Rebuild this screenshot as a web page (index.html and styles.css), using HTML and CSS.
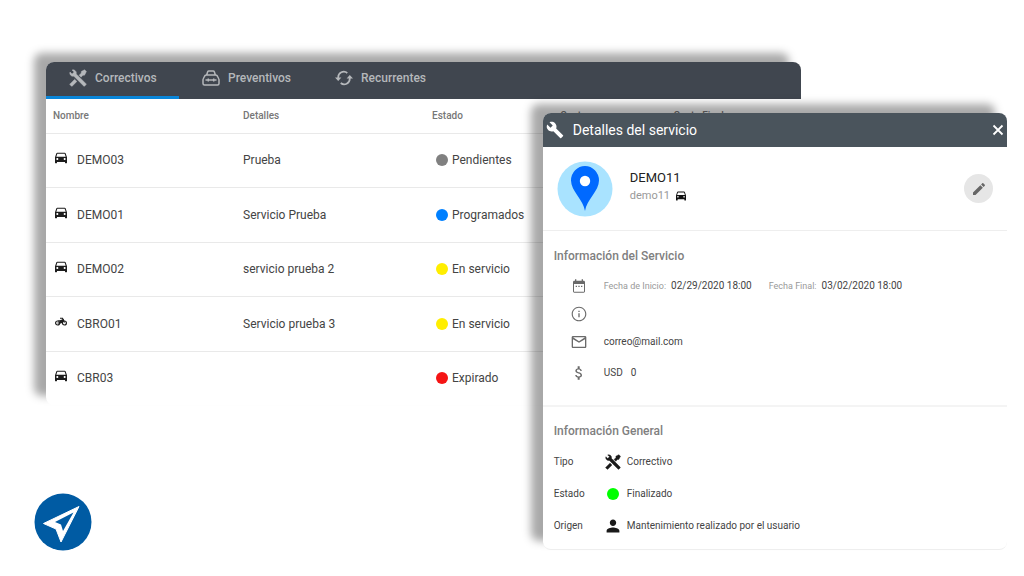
FILE: index.html
```html
<!DOCTYPE html>
<html lang="es">
<head>
<meta charset="utf-8">
<title>Mantenimiento</title>
<link rel="stylesheet" href="styles.css">
</head>
<body>
<svg class="defs" aria-hidden="true">
  <symbol id="tools" viewBox="1 1 22 22"><path d="M21.71 20.29l-1.42 1.42a1 1 0 0 1-1.41 0L7 9.85A3.81 3.81 0 0 1 6 10 4 4 0 0 1 2.22 4.7l2.54 2.54 2.48-2.48L4.7 2.22A4 4 0 0 1 10 6a3.81 3.81 0 0 1-.15 1l11.86 11.88a1 1 0 0 1 0 1.41M2.29 18.88a1 1 0 0 0 0 1.41l1.42 1.42a1 1 0 0 0 1.41 0l5.47-5.46-2.83-2.83M20 2l-4 2v2l-2.6 2.6 2.4 2.4L18 8.500h2L22.300 4z" stroke="currentColor" stroke-width=".6" stroke-linejoin="round"/></symbol>
  <symbol id="car" viewBox="3 4 18 18"><path d="M18.92 6.01C18.72 5.42 18.16 5 17.5 5h-11c-.66 0-1.21.42-1.42 1.01L3 12v8c0 .55.45 1 1 1h1c.55 0 1-.45 1-1v-1h12v1c0 .55.45 1 1 1h1c.55 0 1-.45 1-1v-8l-2.08-5.99zM6.5 16c-.83 0-1.500-.67-1.500-1.500S5.670 13 6.500 13s1.500.67 1.500 1.500S7.330 16 6.500 16zm11 0c-.83 0-1.500-.67-1.500-1.500s.67-1.500 1.500-1.500 1.500.67 1.500 1.500-.67 1.500-1.500 1.500zM5 11l1.500-4.500h11L19 11H5z"/></symbol>
  <symbol id="moto" viewBox="0 2 24 20"><g fill="none" stroke="currentColor" stroke-width="2.400"><circle cx="5.200" cy="14" r="4"/><circle cx="18.800" cy="14" r="4"/><path d="M10 4.500h5L19 13M5 14h6.500l5-5"/></g><path d="M5 8.500h5l4-1.500 3-1 1.500 2.500-5 5.500h-3L9 11z"/></symbol>
</svg>
<main class="stage">
  <section class="panel board">
    <nav class="tabs">
      <button class="tab active"><svg class="tab-icon"><use href="#tools"/></svg>Correctivos</button>
      <button class="tab"><svg class="tab-icon outline" viewBox="0 0 18 18" stroke="currentColor" stroke-width="1.500"><path d="M4.600 6L5.700 2.800Q6 2 6.800 2h4.400q.8 0 1.100.8L13.400 6M4.500 6h9q1.200 0 1.800 1l1.300 2.500q.4.700.4 1.500v3.500q0 1.500-1.500 1.500h-13Q1 16 1 14.500V11q0-.8.400-1.500L2.700 7q.6-1 1.800-1zM3.500 11h11M6.300 9.500v3M11.700 9.500v3"/></svg>Preventivos</button>
      <button class="tab"><svg class="tab-icon" viewBox="0 0 18 18"><path class="outline" stroke="currentColor" stroke-width="1.700" d="M3.200 10V8.500A5.600 5.600 0 0 1 12.300 4M14.800 8v1.500A5.600 5.600 0 0 1 5.700 14"/><path d="M0 8.600h6.400L3.200 12zM11.600 9.400H18L14.800 6z"/></svg>Recurrentes</button>
    </nav>
    <table class="services">
      <colgroup><col class="c-name"><col class="c-detail"><col class="c-state"><col class="c-cost"><col></colgroup>
      <thead><tr><th>Nombre</th><th>Detalles</th><th>Estado</th><th>Costo</th><th>Costo Final</th></tr></thead>
      <tbody>
        <tr><td><span class="cell"><svg class="vehicle"><use href="#car"/></svg>DEMO03</span></td><td>Prueba</td><td><span class="state"><i class="dot gray"></i>Pendientes</span></td><td></td><td></td></tr>
        <tr><td><span class="cell"><svg class="vehicle"><use href="#car"/></svg>DEMO01</span></td><td>Servicio Prueba</td><td><span class="state"><i class="dot blue"></i>Programados</span></td><td></td><td></td></tr>
        <tr><td><span class="cell"><svg class="vehicle"><use href="#car"/></svg>DEMO02</span></td><td>servicio prueba 2</td><td><span class="state"><i class="dot yellow"></i>En servicio</span></td><td></td><td></td></tr>
        <tr><td><span class="cell"><svg class="vehicle"><use href="#moto"/></svg>CBRO01</span></td><td>Servicio prueba 3</td><td><span class="state"><i class="dot yellow"></i>En servicio</span></td><td></td><td></td></tr>
        <tr><td><span class="cell"><svg class="vehicle"><use href="#car"/></svg>CBR03</span></td><td></td><td><span class="state"><i class="dot red"></i>Expirado</span></td><td></td><td></td></tr>
      </tbody>
    </table>
  </section>

  <section class="panel dialog" role="dialog" aria-labelledby="dialog-title">
    <header class="dialog-head">
      <svg class="head-icon" viewBox="0 0 24 24"><path d="M22.700 19l-9.100-9.100c.9-2.300.4-5-1.500-6.900-2-2-5-2.400-7.400-1.300L9 6 6 9 1.600 4.700C.4 7.100.9 10.100 2.900 12.100c1.900 1.900 4.600 2.400 6.900 1.500l9.100 9.100c.4.400 1 .4 1.400 0l2.300-2.300c.5-.4.5-1.100.1-1.400z"/></svg>
      <h2 id="dialog-title">Detalles del servicio</h2>
      <button class="close" aria-label="Cerrar"><svg viewBox="0 0 12 12"><path d="M1.500 1.500l9 9M10.500 1.500l-9 9" stroke="currentColor" stroke-width="1.800"/></svg></button>
    </header>
    <div class="profile">
      <svg class="avatar" viewBox="0 0 56 56"><circle cx="28" cy="28" r="27.500" fill="#a9e3ff"/><path d="M28 50C26.500 39 14 30 14 19.500a14 14.500 0 0 1 28 0C42 30 29.500 39 28 50z" fill="#0069ff"/><circle cx="28" cy="20" r="5.200" fill="#fff"/></svg>
      <div class="who"><strong>DEMO11</strong><span>demo11 <svg class="mini"><use href="#car"/></svg></span></div>
      <button class="edit" aria-label="Editar"><svg viewBox="0 0 24 24"><path d="M3 17.250V21h3.750L17.810 9.940l-3.750-3.750L3 17.250zM20.710 7.040c.39-.39.39-1.020 0-1.410l-2.340-2.340c-.39-.39-1.020-.39-1.410 0l-1.830 1.830 3.750 3.750 1.830-1.830z"/></svg></button>
    </div>
    <div class="info">
      <h3>Información del Servicio</h3>
      <ul>
        <li><svg class="line-icon" viewBox="0 0 24 24"><path d="M19 4h-1V2h-2v2H8V2H6v2H5c-1.100 0-2 .9-2 2v14c0 1.100.9 2 2 2h14c1.100 0 2-.9 2-2V6c0-1.100-.9-2-2-2zm.5 16.500h-15V9h15v11.500zM7 11.500h2v2H7zm4 0h2v2h-2zm4 0h2v2h-2z"/></svg><span class="label">Fecha de Inicio:</span><span class="date">02/29/2020 18:00</span><span class="label">Fecha Final:</span><span>03/02/2020 18:00</span></li>
        <li><svg class="line-icon" viewBox="0 0 24 24"><path d="M11 7h2v2h-2zm0 4h2v6h-2zm1-10C5.900 1 1 5.900 1 12s4.900 11 11 11 11-4.900 11-11S18.100 1 12 1zm0 20.300c-5.100 0-9.300-4.200-9.300-9.300S6.900 2.700 12 2.700s9.300 4.200 9.300 9.300-4.200 9.300-9.300 9.300z"/></svg></li>
        <li><svg class="line-icon" viewBox="0 0 24 24"><path d="M21 3H3c-1.100 0-2 .9-2 2v14c0 1.100.9 2 2 2h18c1.100 0 2-.9 2-2V5c0-1.100-.9-2-2-2zm0 16H3V8l9 5 9-5v11zm-9-8L3 5h18l-9 6z"/></svg><span>correo@mail.com</span></li>
        <li class="cost"><svg class="line-icon" viewBox="0 0 24 24"><path d="M11.800 10.900c-2.270-.59-3-1.200-3-2.150 0-1.090 1.010-1.850 2.700-1.850 1.780 0 2.440.85 2.500 2.100h2.210c-.07-1.720-1.120-3.300-3.210-3.810V2h-3v3.160c-1.940.42-3.500 1.680-3.500 3.610 0 2.310 1.910 3.460 4.700 4.130 2.500.6 3 1.480 3 2.410 0 .69-.49 1.790-2.700 1.790-2.060 0-2.870-.92-2.980-2.100h-2.200c.12 2.190 1.760 3.420 3.680 3.830V22h3v-3.150c1.950-.37 3.500-1.500 3.500-3.550 0-2.840-2.430-3.810-4.700-4.400z"/></svg><span>USD</span><span class="amount">0</span></li>
      </ul>
    </div>
    <div class="general">
      <h3>Información General</h3>
      <dl>
        <dt>Tipo</dt><dd><svg class="value-icon"><use href="#tools"/></svg>Correctivo</dd>
        <dt>Estado</dt><dd><i class="dot green"></i>Finalizado</dd>
        <dt>Origen</dt><dd><svg class="value-icon" viewBox="2 2 20 20"><path d="M12 12c2.210 0 4-1.790 4-4s-1.790-4-4-4-4 1.790-4 4 1.790 4 4 4zm0 2c-2.670 0-8 1.340-8 4v2h16v-2c0-2.660-5.330-4-8-4z"/></svg>Mantenimiento realizado por el usuario</dd>
      </dl>
    </div>
  </section>

  <svg class="brand" viewBox="0 0 58 58" role="img" aria-label="Navegación"><circle cx="29" cy="29" r="28.500" fill="#005ba3"/><path d="M45 13.500L9.500 30.500l12.500 5.500L27 49z" fill="#fff" stroke="#fff" stroke-width="1" stroke-linejoin="round"/><path d="M39.500 19.500L21 29l6 2.500 2 6.500z" fill="#005ba3"/></svg>
</main>
</body>
</html>
```
FILE: styles.css
```css
* { box-sizing: border-box; }
body { margin: 0; background: #fff; color: #444; font-family: Roboto, "Liberation Sans", sans-serif; font-size: 12px; line-height: 16px; }
svg { fill: currentColor; flex: none; display: block; }
button { border: 0; background: none; font: inherit; color: inherit; padding: 0; }
h2, h3, ul, dl, dd { margin: 0; padding: 0; }
.outline { fill: none; }
.defs { position: absolute; width: 0; height: 0; }
.stage { position: relative; min-height: 100vh; padding: 62px 46px 25px; display: flex; flex-direction: column; align-items: flex-start; justify-content: space-between; }
.panel { background: #fff; border-radius: 8px; box-shadow: -12px -9px 8px rgba(0, 0, 0, .34); }
.board { width: 81%; }
.tabs { display: flex; height: 37px; background: #40464f; border-radius: 8px 8px 0 0; overflow: hidden; }
.tab { display: flex; align-items: center; gap: 8px; width: 133px; padding: 0 0 2px 23px; border-bottom: 3px solid transparent; font-weight: 500; color: #b5b8bb; }
.tab.active { border-color: #0a86d9; }
.tab-icon { width: 18px; height: 18px; }
.services { width: 100%; table-layout: fixed; border-collapse: collapse; }
.services th { height: 34px; padding: 0 7px; text-align: left; font-size: 10px; font-weight: 500; color: #777; }
.services td { height: 54px; padding: 0 7px; }
.services tr:nth-child(even) td { height: 55px; }
.services tr { border-bottom: 1px solid #e9e9e9; }
.services tbody tr:last-child { border: 0; }
.c-name { width: 190px; }
.c-detail { width: 189px; }
.c-state { width: 17%; }
.c-cost { width: 15%; }
.cell { display: flex; gap: 10px; padding-left: 2px; }
.vehicle { width: 12px; height: 12px; color: #1d1d1d; }
.state { display: flex; align-items: center; gap: 4px; padding-left: 4px; }
.dot { flex: none; width: 12px; height: 12px; border-radius: 50%; }
.gray { background: #808080; }
.blue { background: #0080ff; }
.yellow { background: #ffee00; }
.red { background: #f51414; }
.green { background: #00ff00; }

.dialog { position: absolute; top: 113px; left: 53%; right: 17px; border-bottom: 1px solid #eee; font-size: 10px; }
.dialog-head { display: flex; align-items: center; height: 34px; padding: 0 3px; gap: 9px; background: #4a545c; color: #fff; border-radius: 8px 8px 0 0; }
.dialog-head h2 { flex: 1; font-size: 14px; font-weight: 400; }
.head-icon { width: 18px; height: 18px; }
.close svg { width: 12px; height: 12px; }
.profile { display: flex; align-items: center; height: 84px; padding: 0 14px; border-bottom: 1px solid #eee; }
.avatar { width: 56px; height: 56px; }
.who { flex: 1; margin-left: 17px; padding-bottom: 5px; font-size: 11px; color: #999; }
.who strong { display: block; font-size: 13px; line-height: 20px; font-weight: 400; color: #222; }
.who span { display: flex; align-items: center; gap: 6px; }
.mini { width: 10px; height: 10px; color: #111; }
.edit { display: grid; place-items: center; width: 29px; height: 29px; border-radius: 50%; background: #e6e6e6; color: #666; }
.edit svg { width: 16px; height: 16px; }
h3 { font-size: 12px; font-weight: 500; color: #808080; }
.info { padding: 17px 11px 16px; border-bottom: 2px solid #f4f4f4; }
.info ul { padding: 8px 0 0 17px; list-style: none; }
.info li { display: flex; align-items: center; height: 28px; }
.info .cost { height: 33px; }
.line-icon { width: 16px; height: 16px; margin-right: 17px; color: #6a6a6a; }
.label { margin-right: 5px; font-size: 9px; color: #999; }
.date { margin-right: 17px; }
.amount { margin-left: 8px; }
.general { padding: 16px 11px 7px; }
.general dl { display: grid; grid-template-columns: 51px 1fr; grid-auto-rows: 32px; align-items: center; padding-top: 7px; }
.general dd { display: flex; align-items: center; gap: 6px; }
.value-icon { width: 16px; height: 16px; color: #1a1a1a; }
.general .dot { margin: 0 2px; }
.brand { width: 58px; height: 58px; margin-left: -12px; }
```
